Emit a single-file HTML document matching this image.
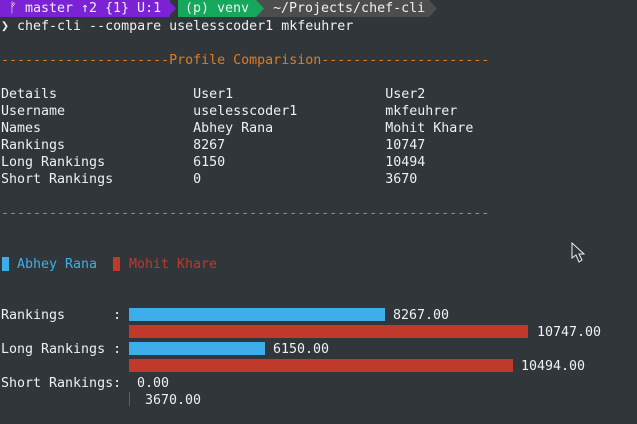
<!DOCTYPE html><html><head><style>
body{margin:0;width:637px;height:424px;background:#31363b;overflow:hidden;position:relative;font-family:"DejaVu Sans Mono","Liberation Mono",monospace;color:#eff0f1}
.l{position:absolute;left:1px;white-space:pre;font-size:13.3px;line-height:17px;height:17px;margin-top:1px}
.o{color:#e07b1e}.b{color:#3daee9}.r{color:#c0392b}
.bar{position:absolute;left:129px;height:13px}
.bl{background:#3daee9}.rd{background:#c0392b}
</style></head><body>
<div style="position:absolute;left:0;top:0;height:17px;width:637px">
<div style="position:absolute;left:0;top:0;width:170px;height:17px;background:#7b22d4"></div>
<svg style="position:absolute;left:168px;top:0" width="10" height="17"><polygon points="0,0 8,8.5 0,17" fill="#7b22d4"/></svg>
<div style="position:absolute;left:178px;top:0;width:78px;height:17px;background:#16a85a"></div>
<svg style="position:absolute;left:256px;top:0" width="10" height="17"><rect width="10" height="17" fill="#4d4d4d"/><polygon points="0,0 8,8.5 0,17" fill="#16a85a"/></svg>
<div style="position:absolute;left:266px;top:0;width:163px;height:17px;background:#4d4d4d"></div>
<svg style="position:absolute;left:429px;top:0" width="10" height="17"><polygon points="0,0 8,8.5 0,17" fill="#4d4d4d"/></svg>
</div>
<div class="l" style="top:-1px;left:9px"><span>ᚠ master ↑2 {1} U:1</span></div>
<div class="l" style="top:-1px;left:185px">(p) venv</div>
<div class="l" style="top:-1px;left:273px">~/Projects/chef-cli</div>
<div class="l" style="top:17px">❯ chef-cli --compare uselesscoder1 mkfeuhrer</div>
<div class="l o" style="top:51px">---------------------Profile Comparision---------------------</div>
<div class="l" style="top:85px">Details                 User1                   User2</div>
<div class="l" style="top:102px">Username                uselesscoder1           mkfeuhrer</div>
<div class="l" style="top:119px">Names                   Abhey Rana              Mohit Khare</div>
<div class="l" style="top:136px">Rankings                8267                    10747</div>
<div class="l" style="top:153px">Long Rankings           6150                    10494</div>
<div class="l" style="top:170px">Short Rankings          0                       3670</div>
<div class="l o" style="top:204px">-------------------------------------------------------------</div>
<div style="position:absolute;left:2px;top:257px;width:7px;height:14px;background:#3daee9"></div>
<div class="l b" style="top:255px;left:17px">Abhey Rana</div>
<div style="position:absolute;left:113px;top:257px;width:7px;height:14px;background:#c0392b"></div>
<div class="l r" style="top:255px;left:129px">Mohit Khare</div>
<div class="l" style="top:306px">Rankings      :</div>
<div class="bar bl" style="top:308px;width:256px"></div><div class="l" style="top:306px;left:393px">8267.00</div>
<div class="bar rd" style="top:325px;width:399px"></div><div class="l" style="top:323px;left:537px">10747.00</div>
<div class="l" style="top:340px">Long Rankings :</div>
<div class="bar bl" style="top:342px;width:136px"></div><div class="l" style="top:340px;left:273px">6150.00</div>
<div class="bar rd" style="top:359px;width:384px"></div><div class="l" style="top:357px;left:521px">10494.00</div>
<div class="l" style="top:374px">Short Rankings:</div><div class="l" style="top:374px;left:137px">0.00</div>
<div style="position:absolute;left:129px;top:392px;width:1px;height:14px;background:#c0392b"></div>
<div class="l" style="top:391px;left:145px">3670.00</div>
<svg style="position:absolute;left:571px;top:242px" width="14" height="22"><polygon points="1,1 1,16 5,13 8,20 11,18 8,12 13,12" fill="#31363b" stroke="#eee" stroke-width="1"/></svg>
</body></html>
